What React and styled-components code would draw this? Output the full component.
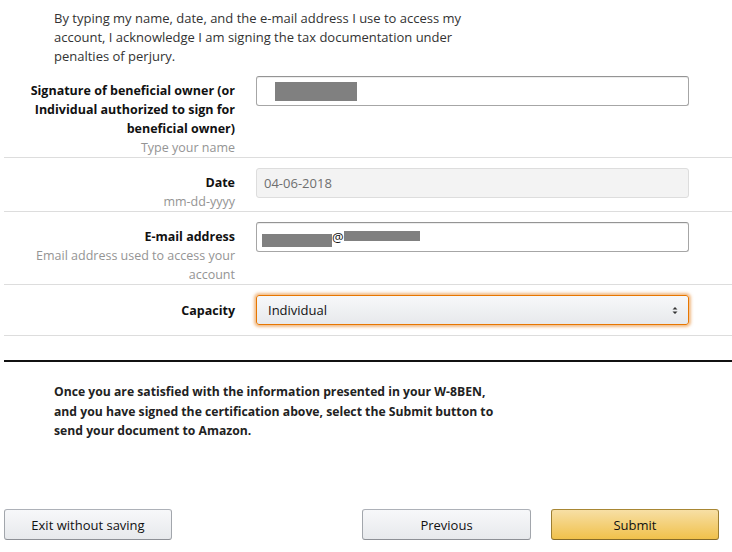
import styled, { createGlobalStyle } from "styled-components";

const GlobalStyle = createGlobalStyle`
  html, body { margin: 0; padding: 0; background: #fff; }
  body { font-family: "Open Sans", "Noto Sans", "DejaVu Sans", sans-serif; color: #111; }
`;

const Page = styled.div`
  width: 732px;
  height: 552px;
  box-sizing: border-box;
  padding: 9px 0 0 4px;
  display: flex;
  flex-direction: column;
  overflow: hidden;
`;

const Intro = styled.p`
  margin: 0 0 10px 50px;
  width: 420px;
  font-size: 13px;
  line-height: 19px;
  color: #333;
`;

const Row = styled.div`
  display: grid;
  grid-template-columns: 231px 433px;
  column-gap: 21px;
  align-items: start;
  padding: ${(p) => p.$pad || "10px 0 0"};
  border-bottom: 1px solid #ddd;
`;

const LabelCol = styled.div`
  text-align: right;
  padding-top: ${(p) => p.$top || "4px"};
`;

const Label = styled.div`
  font-size: 12.5px;
  font-weight: 700;
  line-height: 19px;
  color: #111;
`;

const Hint = styled.div`
  font-size: 12.5px;
  line-height: 19px;
  color: #949494;
`;

const Field = styled.div`
  height: 30px;
  box-sizing: border-box;
  border: 1px solid ${(p) => (p.$disabled ? "#ddd" : "#a6a6a6")};
  border-top-color: ${(p) => (p.$disabled ? "#ddd" : "#949494")};
  border-radius: 3px;
  background: ${(p) => (p.$disabled ? "#f3f3f3" : "#fff")};
  box-shadow: ${(p) => (p.$disabled ? "none" : "inset 0 1px 0 rgba(0,0,0,0.07)")};
  display: flex;
  align-items: center;
  padding: 0 ${(p) => p.$padX || "7px"};
  font-size: 13px;
  color: ${(p) => (p.$disabled ? "#6f6f6f" : "#111")};
`;

const Redact = styled.span`
  display: inline-block;
  width: ${(p) => p.$w}px;
  height: ${(p) => p.$h}px;
  background: #808080;
  margin-top: ${(p) => p.$mt || 0}px;
`;

const At = styled.span`
  font-size: 13px;
  color: #111;
  line-height: 1;
`;

const Select = styled.div`
  height: 30px;
  box-sizing: border-box;
  border: 1px solid #e77600;
  border-radius: 3px;
  background: linear-gradient(to bottom, #f7f8fa, #e7e9ec);
  box-shadow: 0 0 3px 2px rgba(228, 121, 17, 0.5);
  display: flex;
  align-items: center;
  justify-content: space-between;
  padding: 0 10px 0 11px;
  font-size: 13px;
  color: #111;
`;

const Caret = styled.svg`
  width: 6px;
  height: 9px;
`;

const Rule = styled.hr`
  margin: 24px 0 0 0;
  border: 0;
  border-top: 2px solid #111;
`;

const Closing = styled.p`
  margin: 20px 0 0 50px;
  width: 446px;
  font-size: 12.2px;
  font-weight: 700;
  line-height: 19.5px;
  color: #222;
`;

const Actions = styled.div`
  margin-top: auto;
  margin-bottom: 12px;
  display: flex;
  align-items: center;
`;

const Button = styled.button`
  width: ${(p) => p.$w || 168}px;
  height: 31px;
  box-sizing: border-box;
  border-radius: 3px;
  border: 1px solid ${(p) => (p.$primary ? "#a88734" : "#adb1b8")};
  border-color: ${(p) =>
    p.$primary ? "#a88734 #9c7e31 #846a29" : "#adb1b8 #a2a6ac #8d9096"};
  background: ${(p) =>
    p.$primary
      ? "linear-gradient(to bottom, #f7dfa5, #f0c14b)"
      : "linear-gradient(to bottom, #f7f8fa, #e7e9ec)"};
  font-family: inherit;
  font-size: 13px;
  color: #111;
  padding: 0;
  margin-left: ${(p) => p.$ml || 0}px;
  cursor: pointer;
`;

export default function App() {
  return (
    <>
      <GlobalStyle />
      <Page>
        <Intro>
          By typing my name, date, and the e-mail address I use to access my
          account, I acknowledge I am signing the tax documentation under
          penalties of perjury.
        </Intro>

        <Row $pad="0">
          <LabelCol $top="5px">
            <Label>
              Signature of beneficial owner (or Individual authorized to sign
              for beneficial owner)
            </Label>
            <Hint>Type your name</Hint>
          </LabelCol>
          <Field $padX="18px">
            <Redact $w={82} $h={19} />
          </Field>
        </Row>

        <Row>
          <LabelCol $top="5px">
            <Label>Date</Label>
            <Hint>mm-dd-yyyy</Hint>
          </LabelCol>
          <Field $disabled>04-06-2018</Field>
        </Row>

        <Row>
          <LabelCol $top="5px">
            <Label>E-mail address</Label>
            <Hint>Email address used to access your account</Hint>
          </LabelCol>
          <Field $padX="5px">
            <Redact $w={70} $h={13} $mt={6} />
            <At>@</At>
            <Redact $w={76} $h={10} $mt={-2} />
          </Field>
        </Row>

        <Row $pad="10px 0">
          <LabelCol $top="6px">
            <Label>Capacity</Label>
          </LabelCol>
          <Select>
            <span>Individual</span>
            <Caret viewBox="0 0 6 9">
              <path d="M0.5 3.5 L3 1 L5.5 3.5 Z M0.5 5.5 L3 8 L5.5 5.5 Z" fill="#333" />
            </Caret>
          </Select>
        </Row>

        <Rule />

        <Closing>
          Once you are satisfied with the information presented in your
          W-8BEN, and you have signed the certification above, select the
          Submit button to send your document to Amazon.
        </Closing>

        <Actions>
          <Button $w={168}>Exit without saving</Button>
          <Button $w={169} $ml={190}>Previous</Button>
          <Button $primary $w={168} $ml={20}>Submit</Button>
        </Actions>
      </Page>
    </>
  );
}
